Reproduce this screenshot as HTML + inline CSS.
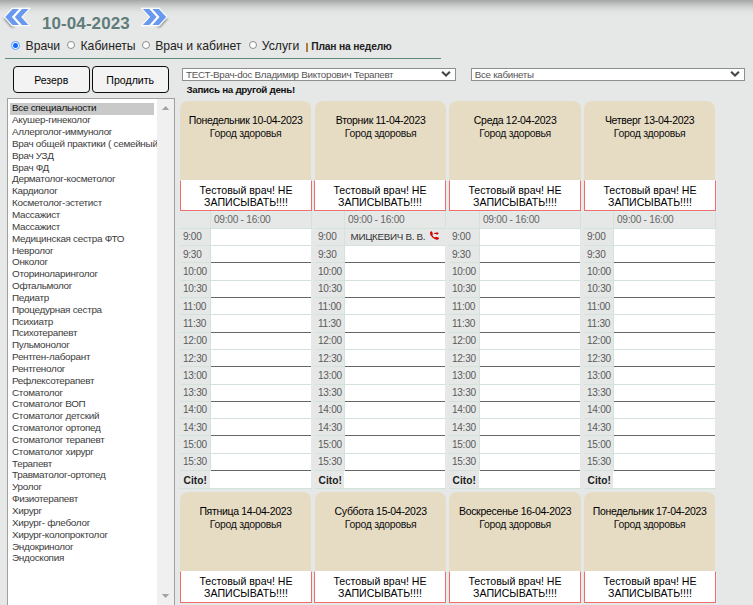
<!DOCTYPE html>
<html><head><meta charset="utf-8"><style>
html,body{margin:0;padding:0;}
body{width:753px;height:605px;overflow:hidden;background:#e6e8e7;position:relative;font-family:'Liberation Sans', sans-serif;}
.t{position:absolute;white-space:nowrap;}
.a{position:absolute;}
</style></head>
<body>
<div class="a" style="left:0;top:0;width:753px;height:17px;background:linear-gradient(#a3a5a4 0px,#b9bbba 3px,#cbcdcc 6px,#d9dbda 9px,#e2e4e3 12px,#e6e8e7 16px);"></div>
<svg class="a" style="left:0;top:0" width="180" height="32" viewBox="0 0 180 32"><defs><filter id="sh0" x="-20%" y="-20%" width="140%" height="160%"><feGaussianBlur stdDeviation="0.9"/></filter></defs>
<g >
<polygon points="3.2,18.2 11.2,27.2 15,27.2 7,18.2" fill="#6a6c6b" opacity="0.8" filter="url(#sh0)"/>
<polygon points="4,17 12,8 30.5,8 22.5,17 30.5,26 12,26" fill="#fff" stroke="#f4f6f5" stroke-width="0.8" stroke-linejoin="round"/>
<polygon points="5.2,17 12.5,9 19,9 11.8,17 19,25 12.5,25" fill="#6898ef"/>
<polygon points="14.8,17 22,9 28.5,9 21.2,17 28.5,25 22,25" fill="#6898ef"/>
</g></svg>
<svg class="a" style="left:0;top:0" width="180" height="32" viewBox="0 0 180 32"><defs><filter id="sh1" x="-20%" y="-20%" width="140%" height="160%"><feGaussianBlur stdDeviation="0.9"/></filter></defs>
<g transform="translate(171.4,0) scale(-1,1)">
<polygon points="3.2,18.2 11.2,27.2 15,27.2 7,18.2" fill="#6a6c6b" opacity="0.8" filter="url(#sh1)"/>
<polygon points="4,17 12,8 30.5,8 22.5,17 30.5,26 12,26" fill="#fff" stroke="#f4f6f5" stroke-width="0.8" stroke-linejoin="round"/>
<polygon points="5.2,17 12.5,9 19,9 11.8,17 19,25 12.5,25" fill="#6898ef"/>
<polygon points="14.8,17 22,9 28.5,9 21.2,17 28.5,25 22,25" fill="#6898ef"/>
</g></svg>
<div class="t" style="left:42.00px;top:13.91px;font-size:17px;line-height:20.4px;color:#5f7d7b;font-weight:bold;letter-spacing:0.08px;">10-04-2023</div>
<div class="a" style="left:11.0px;top:40.8px;width:7px;height:7px;border:1px solid #5d9bff;border-radius:50%;background:#fff;"></div>
<div class="a" style="left:13.0px;top:42.8px;width:5px;height:5px;border-radius:50%;background:#0b6cff;"></div>
<div class="t" style="left:25.50px;top:39.05px;font-size:12.2px;line-height:14.64px;color:#222;">Врачи</div>
<div class="a" style="left:67px;top:41.1px;width:6px;height:6px;border:1px solid #8c8c8c;border-radius:50%;background:#fff;"></div>
<div class="t" style="left:80.50px;top:39.05px;font-size:12.2px;line-height:14.64px;color:#222;">Кабинеты</div>
<div class="a" style="left:142.3px;top:41.1px;width:6px;height:6px;border:1px solid #8c8c8c;border-radius:50%;background:#fff;"></div>
<div class="t" style="left:155.20px;top:39.05px;font-size:12.2px;line-height:14.64px;color:#222;">Врач и кабинет</div>
<div class="a" style="left:249px;top:41.1px;width:6px;height:6px;border:1px solid #8c8c8c;border-radius:50%;background:#fff;"></div>
<div class="t" style="left:261.80px;top:39.05px;font-size:12.2px;line-height:14.64px;color:#222;">Услуги</div>
<div class="a" style="left:306.2px;top:42.6px;width:1.4px;height:9px;background:#b07c3c;"></div>
<div class="t" style="left:311.30px;top:40.89px;font-size:10.26px;line-height:12.31px;color:#222;font-weight:bold;letter-spacing:-0.173px;">План на неделю</div>
<div class="a" style="left:5px;top:58px;width:436px;height:1px;background:#5e8a7e;"></div>
<div class="a" style="left:13px;top:66px;width:75px;height:25px;border:1px solid #0c0c0c;border-radius:4px;background:#f3f3f3;"></div>
<div class="a" style="left:92px;top:66px;width:75px;height:25px;border:1px solid #0c0c0c;border-radius:4px;background:#f3f3f3;"></div>
<div class="t" style="left:34.20px;top:74.06px;font-size:10.5px;line-height:12.6px;color:#000;">Резерв</div>
<div class="t" style="left:106.30px;top:73.96px;font-size:10.6px;line-height:12.72px;color:#000;">Продлить</div>
<div class="a" style="left:182px;top:68px;width:272px;height:11px;border:1px solid #8e8e8e;background:#fff;"></div>
<svg class="a" style="left:441px;top:70px" width="12" height="9" viewBox="0 0 12 9"><polyline points="1.1,1.7 5,5.6 8.9,1.7" fill="none" stroke="#474747" stroke-width="2.1"/></svg>
<div class="t" style="left:186.00px;top:68.71px;font-size:9.82px;line-height:11.78px;color:#555;letter-spacing:-0.299px;">ТЕСТ-Врач-doc Владимир Викторович Терапевт</div>
<div class="a" style="left:471px;top:68px;width:272px;height:11px;border:1px solid #8e8e8e;background:#fff;"></div>
<svg class="a" style="left:730px;top:70px" width="12" height="9" viewBox="0 0 12 9"><polyline points="1.1,1.7 5,5.6 8.9,1.7" fill="none" stroke="#474747" stroke-width="2.1"/></svg>
<div class="t" style="left:474.80px;top:68.77px;font-size:9.75px;line-height:11.7px;color:#555;letter-spacing:-0.293px;">Все кабинеты</div>
<div class="t" style="left:186.50px;top:83.92px;font-size:9.8px;line-height:11.76px;color:#111;font-weight:bold;letter-spacing:-0.293px;">Запись на другой день!</div>
<div class="a" style="left:7px;top:98px;width:166px;height:520px;border:1px solid #a0a0a0;background:#fff;"></div>
<div class="a" style="left:157px;top:99px;width:17px;height:520px;background:#f0f0f0;"></div>
<svg class="a" style="left:160px;top:104px" width="12" height="8" viewBox="0 0 12 8"><polygon points="1.8,5.9 5.8,1.9 9.2,5.9" fill="#a3a3a3"/></svg>
<svg class="a" style="left:160px;top:592px" width="12" height="8" viewBox="0 0 12 8"><polygon points="1.8,2 9.2,2 5.6,6" fill="#a3a3a3"/></svg>
<div class="a" style="left:10px;top:103px;width:144px;height:12px;background:#c9c9c9;"></div>
<div class="a" style="left:0;top:0;width:157px;height:605px;overflow:hidden;"><div class="t" style="left:12px;top:102.44px;font-size:9.91px;line-height:11.84px;color:#111;letter-spacing:-0.297px;">Все специальности</div><div class="t" style="left:12px;top:114.28px;font-size:9.91px;line-height:11.84px;color:#3c3c3c;letter-spacing:-0.294px;">Акушер-гинеколог</div><div class="t" style="left:12px;top:126.12px;font-size:9.91px;line-height:11.84px;color:#3c3c3c;letter-spacing:-0.300px;">Аллерголог-иммунолог</div><div class="t" style="left:12px;top:137.96px;font-size:9.91px;line-height:11.84px;color:#3c3c3c;letter-spacing:-0.291px;">Врач общей практики ( семейный</div><div class="t" style="left:12px;top:149.80px;font-size:9.91px;line-height:11.84px;color:#3c3c3c;letter-spacing:-0.312px;">Врач УЗД</div><div class="t" style="left:12px;top:161.64px;font-size:9.91px;line-height:11.84px;color:#3c3c3c;letter-spacing:-0.317px;">Врач ФД</div><div class="t" style="left:12px;top:173.48px;font-size:9.91px;line-height:11.84px;color:#3c3c3c;letter-spacing:-0.295px;">Дерматолог-косметолог</div><div class="t" style="left:12px;top:185.32px;font-size:9.91px;line-height:11.84px;color:#3c3c3c;letter-spacing:-0.303px;">Кардиолог</div><div class="t" style="left:12px;top:197.16px;font-size:9.91px;line-height:11.84px;color:#3c3c3c;letter-spacing:-0.284px;">Косметолог-эстетист</div><div class="t" style="left:12px;top:209.00px;font-size:9.91px;line-height:11.84px;color:#3c3c3c;letter-spacing:-0.320px;">Массажист</div><div class="t" style="left:12px;top:220.84px;font-size:9.91px;line-height:11.84px;color:#3c3c3c;letter-spacing:-0.320px;">Массажист</div><div class="t" style="left:12px;top:232.68px;font-size:9.91px;line-height:11.84px;color:#3c3c3c;letter-spacing:-0.305px;">Медицинская сестра ФТО</div><div class="t" style="left:12px;top:244.52px;font-size:9.91px;line-height:11.84px;color:#3c3c3c;letter-spacing:-0.309px;">Невролог</div><div class="t" style="left:12px;top:256.36px;font-size:9.91px;line-height:11.84px;color:#3c3c3c;letter-spacing:-0.306px;">Онколог</div><div class="t" style="left:12px;top:268.20px;font-size:9.91px;line-height:11.84px;color:#3c3c3c;letter-spacing:-0.302px;">Оториноларинголог</div><div class="t" style="left:12px;top:280.04px;font-size:9.91px;line-height:11.84px;color:#3c3c3c;letter-spacing:-0.327px;">Офтальмолог</div><div class="t" style="left:12px;top:291.88px;font-size:9.91px;line-height:11.84px;color:#3c3c3c;letter-spacing:-0.315px;">Педиатр</div><div class="t" style="left:12px;top:303.72px;font-size:9.91px;line-height:11.84px;color:#3c3c3c;letter-spacing:-0.299px;">Процедурная сестра</div><div class="t" style="left:12px;top:315.56px;font-size:9.91px;line-height:11.84px;color:#3c3c3c;letter-spacing:-0.307px;">Психиатр</div><div class="t" style="left:12px;top:327.40px;font-size:9.91px;line-height:11.84px;color:#3c3c3c;letter-spacing:-0.301px;">Психотерапевт</div><div class="t" style="left:12px;top:339.24px;font-size:9.91px;line-height:11.84px;color:#3c3c3c;letter-spacing:-0.313px;">Пульмонолог</div><div class="t" style="left:12px;top:351.08px;font-size:9.91px;line-height:11.84px;color:#3c3c3c;letter-spacing:-0.293px;">Рентген-лаборант</div><div class="t" style="left:12px;top:362.92px;font-size:9.91px;line-height:11.84px;color:#3c3c3c;letter-spacing:-0.290px;">Рентгенолог</div><div class="t" style="left:12px;top:374.76px;font-size:9.91px;line-height:11.84px;color:#3c3c3c;letter-spacing:-0.308px;">Рефлексотерапевт</div><div class="t" style="left:12px;top:386.60px;font-size:9.91px;line-height:11.84px;color:#3c3c3c;letter-spacing:-0.305px;">Стоматолог</div><div class="t" style="left:12px;top:398.44px;font-size:9.91px;line-height:11.84px;color:#3c3c3c;letter-spacing:-0.314px;">Стоматолог ВОП</div><div class="t" style="left:12px;top:410.28px;font-size:9.91px;line-height:11.84px;color:#3c3c3c;letter-spacing:-0.290px;">Стоматолог детский</div><div class="t" style="left:12px;top:422.12px;font-size:9.91px;line-height:11.84px;color:#3c3c3c;letter-spacing:-0.295px;">Стоматолог ортопед</div><div class="t" style="left:12px;top:433.96px;font-size:9.91px;line-height:11.84px;color:#3c3c3c;letter-spacing:-0.292px;">Стоматолог терапевт</div><div class="t" style="left:12px;top:445.80px;font-size:9.91px;line-height:11.84px;color:#3c3c3c;letter-spacing:-0.288px;">Стоматолог хирург</div><div class="t" style="left:12px;top:457.64px;font-size:9.91px;line-height:11.84px;color:#3c3c3c;letter-spacing:-0.300px;">Терапевт</div><div class="t" style="left:12px;top:469.48px;font-size:9.91px;line-height:11.84px;color:#3c3c3c;letter-spacing:-0.294px;">Травматолог-ортопед</div><div class="t" style="left:12px;top:481.32px;font-size:9.91px;line-height:11.84px;color:#3c3c3c;letter-spacing:-0.298px;">Уролог</div><div class="t" style="left:12px;top:493.16px;font-size:9.91px;line-height:11.84px;color:#3c3c3c;letter-spacing:-0.304px;">Физиотерапевт</div><div class="t" style="left:12px;top:505.00px;font-size:9.91px;line-height:11.84px;color:#3c3c3c;letter-spacing:-0.297px;">Хирург</div><div class="t" style="left:12px;top:516.84px;font-size:9.91px;line-height:11.84px;color:#3c3c3c;letter-spacing:-0.292px;">Хирург- флеболог</div><div class="t" style="left:12px;top:528.68px;font-size:9.91px;line-height:11.84px;color:#3c3c3c;letter-spacing:-0.287px;">Хирург-колопроктолог</div><div class="t" style="left:12px;top:540.52px;font-size:9.91px;line-height:11.84px;color:#3c3c3c;letter-spacing:-0.306px;">Эндокринолог</div><div class="t" style="left:12px;top:552.36px;font-size:9.91px;line-height:11.84px;color:#3c3c3c;letter-spacing:-0.311px;">Эндоскопия</div></div>
<div class="a" style="left:180px;top:101px;width:131px;height:79px;background:#e6dcc4;border-radius:8px 8px 0 0;"></div>
<div class="t" style="left:180.15px;top:115.37px;font-size:10.49px;line-height:12.59px;color:#000;text-align:center;width:131px;letter-spacing:-0.309px;">Понедельник 10-04-2023</div>
<div class="t" style="left:180.15px;top:127.72px;font-size:10.44px;line-height:12.53px;color:#111;text-align:center;width:131px;letter-spacing:-0.306px;">Город здоровья</div>
<div class="a" style="left:312px;top:180px;width:2px;height:32px;background:#e3efed;"></div>
<div class="a" style="left:180px;top:180px;width:130px;height:29px;background:#fff;border:1px solid #f36b6b;border-top:1px solid #fff;"></div>
<div class="t" style="left:180.00px;top:183.66px;font-size:10.6px;line-height:12.72px;color:#000;text-align:center;width:132px;">Тестовый врач! НЕ</div>
<div class="t" style="left:180.00px;top:195.76px;font-size:10.6px;line-height:12.72px;color:#000;text-align:center;width:132px;">ЗАПИСЫВАТЬ!!!!</div>
<div class="a" style="left:180px;top:211px;width:132px;height:1px;background:#e3efed;"></div>
<div class="a" style="left:311px;top:211px;width:1px;height:18px;background:#d3e3da;"></div>
<div class="t" style="left:213.90px;top:214.06px;font-size:10.18px;line-height:12.22px;color:#666;letter-spacing:-0.263px;">09:00 - 16:00</div>
<div class="a" style="left:210px;top:211px;width:1px;height:259px;background:#d3e3da;"></div>
<div class="a" style="left:180px;top:228px;width:131px;height:1px;background:#d3e3da;"></div>
<div class="a" style="left:211px;top:229px;width:100px;height:16px;background:#fff;"></div>
<div class="a" style="left:180px;top:245px;width:30px;height:1px;background:#d3e3da;"></div>
<div class="a" style="left:211px;top:245px;width:100px;height:1px;background:#d3e3da;"></div>
<div class="t" style="left:183.00px;top:231.47px;font-size:10.07px;line-height:12.08px;color:#5a5a5a;letter-spacing:-0.277px;">9:00</div>
<div class="a" style="left:211px;top:246px;width:100px;height:16px;background:#fff;"></div>
<div class="a" style="left:180px;top:262px;width:30px;height:1px;background:#d3e3da;"></div>
<div class="a" style="left:211px;top:262px;width:100px;height:1px;background:#666;"></div>
<div class="t" style="left:183.00px;top:248.76px;font-size:10.07px;line-height:12.08px;color:#5a5a5a;letter-spacing:-0.277px;">9:30</div>
<div class="a" style="left:211px;top:263px;width:100px;height:17px;background:#fff;"></div>
<div class="a" style="left:180px;top:280px;width:30px;height:1px;background:#d3e3da;"></div>
<div class="a" style="left:211px;top:280px;width:100px;height:1px;background:#d3e3da;"></div>
<div class="t" style="left:183.00px;top:266.05px;font-size:10.07px;line-height:12.08px;color:#5a5a5a;letter-spacing:-0.285px;">10:00</div>
<div class="a" style="left:211px;top:281px;width:100px;height:16px;background:#fff;"></div>
<div class="a" style="left:180px;top:297px;width:30px;height:1px;background:#d3e3da;"></div>
<div class="a" style="left:211px;top:297px;width:100px;height:1px;background:#666;"></div>
<div class="t" style="left:183.00px;top:283.34px;font-size:10.07px;line-height:12.08px;color:#5a5a5a;letter-spacing:-0.285px;">10:30</div>
<div class="a" style="left:211px;top:298px;width:100px;height:16px;background:#fff;"></div>
<div class="a" style="left:180px;top:314px;width:30px;height:1px;background:#d3e3da;"></div>
<div class="a" style="left:211px;top:314px;width:100px;height:1px;background:#d3e3da;"></div>
<div class="t" style="left:183.00px;top:300.63px;font-size:10.07px;line-height:12.08px;color:#5a5a5a;letter-spacing:-0.277px;">11:00</div>
<div class="a" style="left:211px;top:315px;width:100px;height:17px;background:#fff;"></div>
<div class="a" style="left:180px;top:332px;width:30px;height:1px;background:#d3e3da;"></div>
<div class="a" style="left:211px;top:332px;width:100px;height:1px;background:#666;"></div>
<div class="t" style="left:183.00px;top:317.92px;font-size:10.07px;line-height:12.08px;color:#5a5a5a;letter-spacing:-0.277px;">11:30</div>
<div class="a" style="left:211px;top:333px;width:100px;height:16px;background:#fff;"></div>
<div class="a" style="left:180px;top:349px;width:30px;height:1px;background:#d3e3da;"></div>
<div class="a" style="left:211px;top:349px;width:100px;height:1px;background:#d3e3da;"></div>
<div class="t" style="left:183.00px;top:335.21px;font-size:10.07px;line-height:12.08px;color:#5a5a5a;letter-spacing:-0.285px;">12:00</div>
<div class="a" style="left:211px;top:350px;width:100px;height:16px;background:#fff;"></div>
<div class="a" style="left:180px;top:366px;width:30px;height:1px;background:#d3e3da;"></div>
<div class="a" style="left:211px;top:366px;width:100px;height:1px;background:#666;"></div>
<div class="t" style="left:183.00px;top:352.50px;font-size:10.07px;line-height:12.08px;color:#5a5a5a;letter-spacing:-0.285px;">12:30</div>
<div class="a" style="left:211px;top:367px;width:100px;height:17px;background:#fff;"></div>
<div class="a" style="left:180px;top:384px;width:30px;height:1px;background:#d3e3da;"></div>
<div class="a" style="left:211px;top:384px;width:100px;height:1px;background:#d3e3da;"></div>
<div class="t" style="left:183.00px;top:369.79px;font-size:10.07px;line-height:12.08px;color:#5a5a5a;letter-spacing:-0.285px;">13:00</div>
<div class="a" style="left:211px;top:385px;width:100px;height:16px;background:#fff;"></div>
<div class="a" style="left:180px;top:401px;width:30px;height:1px;background:#d3e3da;"></div>
<div class="a" style="left:211px;top:401px;width:100px;height:1px;background:#666;"></div>
<div class="t" style="left:183.00px;top:387.08px;font-size:10.07px;line-height:12.08px;color:#5a5a5a;letter-spacing:-0.285px;">13:30</div>
<div class="a" style="left:211px;top:402px;width:100px;height:16px;background:#fff;"></div>
<div class="a" style="left:180px;top:418px;width:30px;height:1px;background:#d3e3da;"></div>
<div class="a" style="left:211px;top:418px;width:100px;height:1px;background:#d3e3da;"></div>
<div class="t" style="left:183.00px;top:404.37px;font-size:10.07px;line-height:12.08px;color:#5a5a5a;letter-spacing:-0.285px;">14:00</div>
<div class="a" style="left:211px;top:419px;width:100px;height:16px;background:#fff;"></div>
<div class="a" style="left:180px;top:435px;width:30px;height:1px;background:#d3e3da;"></div>
<div class="a" style="left:211px;top:435px;width:100px;height:1px;background:#666;"></div>
<div class="t" style="left:183.00px;top:421.66px;font-size:10.07px;line-height:12.08px;color:#5a5a5a;letter-spacing:-0.285px;">14:30</div>
<div class="a" style="left:211px;top:436px;width:100px;height:17px;background:#fff;"></div>
<div class="a" style="left:180px;top:453px;width:30px;height:1px;background:#d3e3da;"></div>
<div class="a" style="left:211px;top:453px;width:100px;height:1px;background:#d3e3da;"></div>
<div class="t" style="left:183.00px;top:438.95px;font-size:10.07px;line-height:12.08px;color:#5a5a5a;letter-spacing:-0.285px;">15:00</div>
<div class="a" style="left:211px;top:454px;width:100px;height:16px;background:#fff;"></div>
<div class="a" style="left:180px;top:470px;width:30px;height:1px;background:#d3e3da;"></div>
<div class="a" style="left:211px;top:470px;width:100px;height:1px;background:#666;"></div>
<div class="t" style="left:183.00px;top:456.24px;font-size:10.07px;line-height:12.08px;color:#5a5a5a;letter-spacing:-0.285px;">15:30</div>
<div class="a" style="left:210px;top:471px;width:101px;height:17px;background:#fff;"></div>
<div class="a" style="left:180px;top:488px;width:132px;height:1px;background:#d3e3da;"></div>
<div class="t" style="left:183.60px;top:474.74px;font-size:10.2px;line-height:12.24px;color:#1a1a1a;font-weight:bold;">Cito!</div>
<div class="a" style="left:315px;top:101px;width:131px;height:79px;background:#e6dcc4;border-radius:8px 8px 0 0;"></div>
<div class="t" style="left:315.15px;top:115.37px;font-size:10.49px;line-height:12.59px;color:#000;text-align:center;width:131px;letter-spacing:-0.297px;">Вторник 11-04-2023</div>
<div class="t" style="left:315.15px;top:127.72px;font-size:10.44px;line-height:12.53px;color:#111;text-align:center;width:131px;letter-spacing:-0.306px;">Город здоровья</div>
<div class="a" style="left:446px;top:180px;width:2px;height:32px;background:#e3efed;"></div>
<div class="a" style="left:314px;top:180px;width:130px;height:29px;background:#fff;border:1px solid #f36b6b;border-top:1px solid #fff;"></div>
<div class="t" style="left:314.00px;top:183.66px;font-size:10.6px;line-height:12.72px;color:#000;text-align:center;width:132px;">Тестовый врач! НЕ</div>
<div class="t" style="left:314.00px;top:195.76px;font-size:10.6px;line-height:12.72px;color:#000;text-align:center;width:132px;">ЗАПИСЫВАТЬ!!!!</div>
<div class="a" style="left:315px;top:211px;width:131px;height:1px;background:#e3efed;"></div>
<div class="a" style="left:445px;top:211px;width:1px;height:18px;background:#d3e3da;"></div>
<div class="t" style="left:347.90px;top:214.06px;font-size:10.18px;line-height:12.22px;color:#666;letter-spacing:-0.263px;">09:00 - 16:00</div>
<div class="a" style="left:344px;top:211px;width:1px;height:259px;background:#d3e3da;"></div>
<div class="a" style="left:315px;top:228px;width:130px;height:1px;background:#d3e3da;"></div>
<div class="a" style="left:345px;top:229px;width:100px;height:16px;background:#e6e8e7;"></div>
<div class="a" style="left:315px;top:245px;width:29px;height:1px;background:#d3e3da;"></div>
<div class="a" style="left:345px;top:245px;width:100px;height:1px;background:#d3e3da;"></div>
<div class="t" style="left:318.00px;top:231.47px;font-size:10.07px;line-height:12.08px;color:#5a5a5a;letter-spacing:-0.277px;">9:00</div>
<div class="t" style="left:350.50px;top:231.17px;font-size:9.86px;line-height:11.83px;color:#333;letter-spacing:-0.322px;">МИЦКЕВИЧ В. В.</div>
<svg class="a" style="left:427px;top:228px" width="16" height="16" viewBox="0 0 16 16"><ellipse cx="4.4" cy="5.6" rx="1.35" ry="2.4" fill="#d40000" transform="rotate(-8 4.4 5.6)"/><path d="M4.7,7.6 Q5.6,9.6 8.2,10.3" fill="none" stroke="#d40000" stroke-width="1.3"/><ellipse cx="9.7" cy="10.3" rx="2.3" ry="1.35" fill="#d40000" transform="rotate(8 9.7 10.3)"/><path d="M7.2,5.4 L10.3,5.4" stroke="#d40000" stroke-width="1.2"/><polygon points="9.6,3.7 11.8,5.4 9.6,7.1" fill="#d40000"/></svg>
<div class="a" style="left:345px;top:246px;width:100px;height:16px;background:#fff;"></div>
<div class="a" style="left:315px;top:262px;width:29px;height:1px;background:#d3e3da;"></div>
<div class="a" style="left:345px;top:262px;width:100px;height:1px;background:#666;"></div>
<div class="t" style="left:318.00px;top:248.76px;font-size:10.07px;line-height:12.08px;color:#5a5a5a;letter-spacing:-0.277px;">9:30</div>
<div class="a" style="left:345px;top:263px;width:100px;height:17px;background:#fff;"></div>
<div class="a" style="left:315px;top:280px;width:29px;height:1px;background:#d3e3da;"></div>
<div class="a" style="left:345px;top:280px;width:100px;height:1px;background:#d3e3da;"></div>
<div class="t" style="left:318.00px;top:266.05px;font-size:10.07px;line-height:12.08px;color:#5a5a5a;letter-spacing:-0.285px;">10:00</div>
<div class="a" style="left:345px;top:281px;width:100px;height:16px;background:#fff;"></div>
<div class="a" style="left:315px;top:297px;width:29px;height:1px;background:#d3e3da;"></div>
<div class="a" style="left:345px;top:297px;width:100px;height:1px;background:#666;"></div>
<div class="t" style="left:318.00px;top:283.34px;font-size:10.07px;line-height:12.08px;color:#5a5a5a;letter-spacing:-0.285px;">10:30</div>
<div class="a" style="left:345px;top:298px;width:100px;height:16px;background:#fff;"></div>
<div class="a" style="left:315px;top:314px;width:29px;height:1px;background:#d3e3da;"></div>
<div class="a" style="left:345px;top:314px;width:100px;height:1px;background:#d3e3da;"></div>
<div class="t" style="left:318.00px;top:300.63px;font-size:10.07px;line-height:12.08px;color:#5a5a5a;letter-spacing:-0.277px;">11:00</div>
<div class="a" style="left:345px;top:315px;width:100px;height:17px;background:#fff;"></div>
<div class="a" style="left:315px;top:332px;width:29px;height:1px;background:#d3e3da;"></div>
<div class="a" style="left:345px;top:332px;width:100px;height:1px;background:#666;"></div>
<div class="t" style="left:318.00px;top:317.92px;font-size:10.07px;line-height:12.08px;color:#5a5a5a;letter-spacing:-0.277px;">11:30</div>
<div class="a" style="left:345px;top:333px;width:100px;height:16px;background:#fff;"></div>
<div class="a" style="left:315px;top:349px;width:29px;height:1px;background:#d3e3da;"></div>
<div class="a" style="left:345px;top:349px;width:100px;height:1px;background:#d3e3da;"></div>
<div class="t" style="left:318.00px;top:335.21px;font-size:10.07px;line-height:12.08px;color:#5a5a5a;letter-spacing:-0.285px;">12:00</div>
<div class="a" style="left:345px;top:350px;width:100px;height:16px;background:#fff;"></div>
<div class="a" style="left:315px;top:366px;width:29px;height:1px;background:#d3e3da;"></div>
<div class="a" style="left:345px;top:366px;width:100px;height:1px;background:#666;"></div>
<div class="t" style="left:318.00px;top:352.50px;font-size:10.07px;line-height:12.08px;color:#5a5a5a;letter-spacing:-0.285px;">12:30</div>
<div class="a" style="left:345px;top:367px;width:100px;height:17px;background:#fff;"></div>
<div class="a" style="left:315px;top:384px;width:29px;height:1px;background:#d3e3da;"></div>
<div class="a" style="left:345px;top:384px;width:100px;height:1px;background:#d3e3da;"></div>
<div class="t" style="left:318.00px;top:369.79px;font-size:10.07px;line-height:12.08px;color:#5a5a5a;letter-spacing:-0.285px;">13:00</div>
<div class="a" style="left:345px;top:385px;width:100px;height:16px;background:#fff;"></div>
<div class="a" style="left:315px;top:401px;width:29px;height:1px;background:#d3e3da;"></div>
<div class="a" style="left:345px;top:401px;width:100px;height:1px;background:#666;"></div>
<div class="t" style="left:318.00px;top:387.08px;font-size:10.07px;line-height:12.08px;color:#5a5a5a;letter-spacing:-0.285px;">13:30</div>
<div class="a" style="left:345px;top:402px;width:100px;height:16px;background:#fff;"></div>
<div class="a" style="left:315px;top:418px;width:29px;height:1px;background:#d3e3da;"></div>
<div class="a" style="left:345px;top:418px;width:100px;height:1px;background:#d3e3da;"></div>
<div class="t" style="left:318.00px;top:404.37px;font-size:10.07px;line-height:12.08px;color:#5a5a5a;letter-spacing:-0.285px;">14:00</div>
<div class="a" style="left:345px;top:419px;width:100px;height:16px;background:#fff;"></div>
<div class="a" style="left:315px;top:435px;width:29px;height:1px;background:#d3e3da;"></div>
<div class="a" style="left:345px;top:435px;width:100px;height:1px;background:#666;"></div>
<div class="t" style="left:318.00px;top:421.66px;font-size:10.07px;line-height:12.08px;color:#5a5a5a;letter-spacing:-0.285px;">14:30</div>
<div class="a" style="left:345px;top:436px;width:100px;height:17px;background:#fff;"></div>
<div class="a" style="left:315px;top:453px;width:29px;height:1px;background:#d3e3da;"></div>
<div class="a" style="left:345px;top:453px;width:100px;height:1px;background:#d3e3da;"></div>
<div class="t" style="left:318.00px;top:438.95px;font-size:10.07px;line-height:12.08px;color:#5a5a5a;letter-spacing:-0.285px;">15:00</div>
<div class="a" style="left:345px;top:454px;width:100px;height:16px;background:#fff;"></div>
<div class="a" style="left:315px;top:470px;width:29px;height:1px;background:#d3e3da;"></div>
<div class="a" style="left:345px;top:470px;width:100px;height:1px;background:#666;"></div>
<div class="t" style="left:318.00px;top:456.24px;font-size:10.07px;line-height:12.08px;color:#5a5a5a;letter-spacing:-0.285px;">15:30</div>
<div class="a" style="left:344px;top:471px;width:101px;height:17px;background:#fff;"></div>
<div class="a" style="left:315px;top:488px;width:131px;height:1px;background:#d3e3da;"></div>
<div class="t" style="left:318.60px;top:474.74px;font-size:10.2px;line-height:12.24px;color:#1a1a1a;font-weight:bold;">Cito!</div>
<div class="a" style="left:449px;top:101px;width:132px;height:79px;background:#e6dcc4;border-radius:8px 8px 0 0;"></div>
<div class="t" style="left:449.15px;top:115.37px;font-size:10.49px;line-height:12.59px;color:#000;text-align:center;width:132px;letter-spacing:-0.308px;">Среда 12-04-2023</div>
<div class="t" style="left:449.15px;top:127.72px;font-size:10.44px;line-height:12.53px;color:#111;text-align:center;width:132px;letter-spacing:-0.306px;">Город здоровья</div>
<div class="a" style="left:581px;top:180px;width:2px;height:32px;background:#e3efed;"></div>
<div class="a" style="left:449px;top:180px;width:130px;height:29px;background:#fff;border:1px solid #f36b6b;border-top:1px solid #fff;"></div>
<div class="t" style="left:449.00px;top:183.66px;font-size:10.6px;line-height:12.72px;color:#000;text-align:center;width:132px;">Тестовый врач! НЕ</div>
<div class="t" style="left:449.00px;top:195.76px;font-size:10.6px;line-height:12.72px;color:#000;text-align:center;width:132px;">ЗАПИСЫВАТЬ!!!!</div>
<div class="a" style="left:449px;top:211px;width:132px;height:1px;background:#e3efed;"></div>
<div class="a" style="left:580px;top:211px;width:1px;height:18px;background:#d3e3da;"></div>
<div class="t" style="left:482.90px;top:214.06px;font-size:10.18px;line-height:12.22px;color:#666;letter-spacing:-0.263px;">09:00 - 16:00</div>
<div class="a" style="left:479px;top:211px;width:1px;height:259px;background:#d3e3da;"></div>
<div class="a" style="left:449px;top:228px;width:131px;height:1px;background:#d3e3da;"></div>
<div class="a" style="left:480px;top:229px;width:100px;height:16px;background:#fff;"></div>
<div class="a" style="left:449px;top:245px;width:30px;height:1px;background:#d3e3da;"></div>
<div class="a" style="left:480px;top:245px;width:100px;height:1px;background:#d3e3da;"></div>
<div class="t" style="left:452.00px;top:231.47px;font-size:10.07px;line-height:12.08px;color:#5a5a5a;letter-spacing:-0.277px;">9:00</div>
<div class="a" style="left:480px;top:246px;width:100px;height:16px;background:#fff;"></div>
<div class="a" style="left:449px;top:262px;width:30px;height:1px;background:#d3e3da;"></div>
<div class="a" style="left:480px;top:262px;width:100px;height:1px;background:#666;"></div>
<div class="t" style="left:452.00px;top:248.76px;font-size:10.07px;line-height:12.08px;color:#5a5a5a;letter-spacing:-0.277px;">9:30</div>
<div class="a" style="left:480px;top:263px;width:100px;height:17px;background:#fff;"></div>
<div class="a" style="left:449px;top:280px;width:30px;height:1px;background:#d3e3da;"></div>
<div class="a" style="left:480px;top:280px;width:100px;height:1px;background:#d3e3da;"></div>
<div class="t" style="left:452.00px;top:266.05px;font-size:10.07px;line-height:12.08px;color:#5a5a5a;letter-spacing:-0.285px;">10:00</div>
<div class="a" style="left:480px;top:281px;width:100px;height:16px;background:#fff;"></div>
<div class="a" style="left:449px;top:297px;width:30px;height:1px;background:#d3e3da;"></div>
<div class="a" style="left:480px;top:297px;width:100px;height:1px;background:#666;"></div>
<div class="t" style="left:452.00px;top:283.34px;font-size:10.07px;line-height:12.08px;color:#5a5a5a;letter-spacing:-0.285px;">10:30</div>
<div class="a" style="left:480px;top:298px;width:100px;height:16px;background:#fff;"></div>
<div class="a" style="left:449px;top:314px;width:30px;height:1px;background:#d3e3da;"></div>
<div class="a" style="left:480px;top:314px;width:100px;height:1px;background:#d3e3da;"></div>
<div class="t" style="left:452.00px;top:300.63px;font-size:10.07px;line-height:12.08px;color:#5a5a5a;letter-spacing:-0.277px;">11:00</div>
<div class="a" style="left:480px;top:315px;width:100px;height:17px;background:#fff;"></div>
<div class="a" style="left:449px;top:332px;width:30px;height:1px;background:#d3e3da;"></div>
<div class="a" style="left:480px;top:332px;width:100px;height:1px;background:#666;"></div>
<div class="t" style="left:452.00px;top:317.92px;font-size:10.07px;line-height:12.08px;color:#5a5a5a;letter-spacing:-0.277px;">11:30</div>
<div class="a" style="left:480px;top:333px;width:100px;height:16px;background:#fff;"></div>
<div class="a" style="left:449px;top:349px;width:30px;height:1px;background:#d3e3da;"></div>
<div class="a" style="left:480px;top:349px;width:100px;height:1px;background:#d3e3da;"></div>
<div class="t" style="left:452.00px;top:335.21px;font-size:10.07px;line-height:12.08px;color:#5a5a5a;letter-spacing:-0.285px;">12:00</div>
<div class="a" style="left:480px;top:350px;width:100px;height:16px;background:#fff;"></div>
<div class="a" style="left:449px;top:366px;width:30px;height:1px;background:#d3e3da;"></div>
<div class="a" style="left:480px;top:366px;width:100px;height:1px;background:#666;"></div>
<div class="t" style="left:452.00px;top:352.50px;font-size:10.07px;line-height:12.08px;color:#5a5a5a;letter-spacing:-0.285px;">12:30</div>
<div class="a" style="left:480px;top:367px;width:100px;height:17px;background:#fff;"></div>
<div class="a" style="left:449px;top:384px;width:30px;height:1px;background:#d3e3da;"></div>
<div class="a" style="left:480px;top:384px;width:100px;height:1px;background:#d3e3da;"></div>
<div class="t" style="left:452.00px;top:369.79px;font-size:10.07px;line-height:12.08px;color:#5a5a5a;letter-spacing:-0.285px;">13:00</div>
<div class="a" style="left:480px;top:385px;width:100px;height:16px;background:#fff;"></div>
<div class="a" style="left:449px;top:401px;width:30px;height:1px;background:#d3e3da;"></div>
<div class="a" style="left:480px;top:401px;width:100px;height:1px;background:#666;"></div>
<div class="t" style="left:452.00px;top:387.08px;font-size:10.07px;line-height:12.08px;color:#5a5a5a;letter-spacing:-0.285px;">13:30</div>
<div class="a" style="left:480px;top:402px;width:100px;height:16px;background:#fff;"></div>
<div class="a" style="left:449px;top:418px;width:30px;height:1px;background:#d3e3da;"></div>
<div class="a" style="left:480px;top:418px;width:100px;height:1px;background:#d3e3da;"></div>
<div class="t" style="left:452.00px;top:404.37px;font-size:10.07px;line-height:12.08px;color:#5a5a5a;letter-spacing:-0.285px;">14:00</div>
<div class="a" style="left:480px;top:419px;width:100px;height:16px;background:#fff;"></div>
<div class="a" style="left:449px;top:435px;width:30px;height:1px;background:#d3e3da;"></div>
<div class="a" style="left:480px;top:435px;width:100px;height:1px;background:#666;"></div>
<div class="t" style="left:452.00px;top:421.66px;font-size:10.07px;line-height:12.08px;color:#5a5a5a;letter-spacing:-0.285px;">14:30</div>
<div class="a" style="left:480px;top:436px;width:100px;height:17px;background:#fff;"></div>
<div class="a" style="left:449px;top:453px;width:30px;height:1px;background:#d3e3da;"></div>
<div class="a" style="left:480px;top:453px;width:100px;height:1px;background:#d3e3da;"></div>
<div class="t" style="left:452.00px;top:438.95px;font-size:10.07px;line-height:12.08px;color:#5a5a5a;letter-spacing:-0.285px;">15:00</div>
<div class="a" style="left:480px;top:454px;width:100px;height:16px;background:#fff;"></div>
<div class="a" style="left:449px;top:470px;width:30px;height:1px;background:#d3e3da;"></div>
<div class="a" style="left:480px;top:470px;width:100px;height:1px;background:#666;"></div>
<div class="t" style="left:452.00px;top:456.24px;font-size:10.07px;line-height:12.08px;color:#5a5a5a;letter-spacing:-0.285px;">15:30</div>
<div class="a" style="left:479px;top:471px;width:101px;height:17px;background:#fff;"></div>
<div class="a" style="left:449px;top:488px;width:132px;height:1px;background:#d3e3da;"></div>
<div class="t" style="left:452.60px;top:474.74px;font-size:10.2px;line-height:12.24px;color:#1a1a1a;font-weight:bold;">Cito!</div>
<div class="a" style="left:584px;top:101px;width:131px;height:79px;background:#e6dcc4;border-radius:8px 8px 0 0;"></div>
<div class="t" style="left:584.15px;top:115.37px;font-size:10.49px;line-height:12.59px;color:#000;text-align:center;width:131px;letter-spacing:-0.296px;">Четверг 13-04-2023</div>
<div class="t" style="left:584.15px;top:127.72px;font-size:10.44px;line-height:12.53px;color:#111;text-align:center;width:131px;letter-spacing:-0.306px;">Город здоровья</div>
<div class="a" style="left:716px;top:180px;width:1px;height:32px;background:#e3efed;"></div>
<div class="a" style="left:584px;top:180px;width:130px;height:29px;background:#fff;border:1px solid #f36b6b;border-top:1px solid #fff;"></div>
<div class="t" style="left:584.00px;top:183.66px;font-size:10.6px;line-height:12.72px;color:#000;text-align:center;width:132px;">Тестовый врач! НЕ</div>
<div class="t" style="left:584.00px;top:195.76px;font-size:10.6px;line-height:12.72px;color:#000;text-align:center;width:132px;">ЗАПИСЫВАТЬ!!!!</div>
<div class="a" style="left:584px;top:211px;width:132px;height:1px;background:#e3efed;"></div>
<div class="a" style="left:715px;top:211px;width:1px;height:18px;background:#d3e3da;"></div>
<div class="t" style="left:616.90px;top:214.06px;font-size:10.18px;line-height:12.22px;color:#666;letter-spacing:-0.263px;">09:00 - 16:00</div>
<div class="a" style="left:613px;top:211px;width:1px;height:259px;background:#d3e3da;"></div>
<div class="a" style="left:584px;top:228px;width:131px;height:1px;background:#d3e3da;"></div>
<div class="a" style="left:614px;top:229px;width:101px;height:16px;background:#fff;"></div>
<div class="a" style="left:584px;top:245px;width:29px;height:1px;background:#d3e3da;"></div>
<div class="a" style="left:614px;top:245px;width:101px;height:1px;background:#d3e3da;"></div>
<div class="t" style="left:587.00px;top:231.47px;font-size:10.07px;line-height:12.08px;color:#5a5a5a;letter-spacing:-0.277px;">9:00</div>
<div class="a" style="left:614px;top:246px;width:101px;height:16px;background:#fff;"></div>
<div class="a" style="left:584px;top:262px;width:29px;height:1px;background:#d3e3da;"></div>
<div class="a" style="left:614px;top:262px;width:101px;height:1px;background:#666;"></div>
<div class="t" style="left:587.00px;top:248.76px;font-size:10.07px;line-height:12.08px;color:#5a5a5a;letter-spacing:-0.277px;">9:30</div>
<div class="a" style="left:614px;top:263px;width:101px;height:17px;background:#fff;"></div>
<div class="a" style="left:584px;top:280px;width:29px;height:1px;background:#d3e3da;"></div>
<div class="a" style="left:614px;top:280px;width:101px;height:1px;background:#d3e3da;"></div>
<div class="t" style="left:587.00px;top:266.05px;font-size:10.07px;line-height:12.08px;color:#5a5a5a;letter-spacing:-0.285px;">10:00</div>
<div class="a" style="left:614px;top:281px;width:101px;height:16px;background:#fff;"></div>
<div class="a" style="left:584px;top:297px;width:29px;height:1px;background:#d3e3da;"></div>
<div class="a" style="left:614px;top:297px;width:101px;height:1px;background:#666;"></div>
<div class="t" style="left:587.00px;top:283.34px;font-size:10.07px;line-height:12.08px;color:#5a5a5a;letter-spacing:-0.285px;">10:30</div>
<div class="a" style="left:614px;top:298px;width:101px;height:16px;background:#fff;"></div>
<div class="a" style="left:584px;top:314px;width:29px;height:1px;background:#d3e3da;"></div>
<div class="a" style="left:614px;top:314px;width:101px;height:1px;background:#d3e3da;"></div>
<div class="t" style="left:587.00px;top:300.63px;font-size:10.07px;line-height:12.08px;color:#5a5a5a;letter-spacing:-0.277px;">11:00</div>
<div class="a" style="left:614px;top:315px;width:101px;height:17px;background:#fff;"></div>
<div class="a" style="left:584px;top:332px;width:29px;height:1px;background:#d3e3da;"></div>
<div class="a" style="left:614px;top:332px;width:101px;height:1px;background:#666;"></div>
<div class="t" style="left:587.00px;top:317.92px;font-size:10.07px;line-height:12.08px;color:#5a5a5a;letter-spacing:-0.277px;">11:30</div>
<div class="a" style="left:614px;top:333px;width:101px;height:16px;background:#fff;"></div>
<div class="a" style="left:584px;top:349px;width:29px;height:1px;background:#d3e3da;"></div>
<div class="a" style="left:614px;top:349px;width:101px;height:1px;background:#d3e3da;"></div>
<div class="t" style="left:587.00px;top:335.21px;font-size:10.07px;line-height:12.08px;color:#5a5a5a;letter-spacing:-0.285px;">12:00</div>
<div class="a" style="left:614px;top:350px;width:101px;height:16px;background:#fff;"></div>
<div class="a" style="left:584px;top:366px;width:29px;height:1px;background:#d3e3da;"></div>
<div class="a" style="left:614px;top:366px;width:101px;height:1px;background:#666;"></div>
<div class="t" style="left:587.00px;top:352.50px;font-size:10.07px;line-height:12.08px;color:#5a5a5a;letter-spacing:-0.285px;">12:30</div>
<div class="a" style="left:614px;top:367px;width:101px;height:17px;background:#fff;"></div>
<div class="a" style="left:584px;top:384px;width:29px;height:1px;background:#d3e3da;"></div>
<div class="a" style="left:614px;top:384px;width:101px;height:1px;background:#d3e3da;"></div>
<div class="t" style="left:587.00px;top:369.79px;font-size:10.07px;line-height:12.08px;color:#5a5a5a;letter-spacing:-0.285px;">13:00</div>
<div class="a" style="left:614px;top:385px;width:101px;height:16px;background:#fff;"></div>
<div class="a" style="left:584px;top:401px;width:29px;height:1px;background:#d3e3da;"></div>
<div class="a" style="left:614px;top:401px;width:101px;height:1px;background:#666;"></div>
<div class="t" style="left:587.00px;top:387.08px;font-size:10.07px;line-height:12.08px;color:#5a5a5a;letter-spacing:-0.285px;">13:30</div>
<div class="a" style="left:614px;top:402px;width:101px;height:16px;background:#fff;"></div>
<div class="a" style="left:584px;top:418px;width:29px;height:1px;background:#d3e3da;"></div>
<div class="a" style="left:614px;top:418px;width:101px;height:1px;background:#d3e3da;"></div>
<div class="t" style="left:587.00px;top:404.37px;font-size:10.07px;line-height:12.08px;color:#5a5a5a;letter-spacing:-0.285px;">14:00</div>
<div class="a" style="left:614px;top:419px;width:101px;height:16px;background:#fff;"></div>
<div class="a" style="left:584px;top:435px;width:29px;height:1px;background:#d3e3da;"></div>
<div class="a" style="left:614px;top:435px;width:101px;height:1px;background:#666;"></div>
<div class="t" style="left:587.00px;top:421.66px;font-size:10.07px;line-height:12.08px;color:#5a5a5a;letter-spacing:-0.285px;">14:30</div>
<div class="a" style="left:614px;top:436px;width:101px;height:17px;background:#fff;"></div>
<div class="a" style="left:584px;top:453px;width:29px;height:1px;background:#d3e3da;"></div>
<div class="a" style="left:614px;top:453px;width:101px;height:1px;background:#d3e3da;"></div>
<div class="t" style="left:587.00px;top:438.95px;font-size:10.07px;line-height:12.08px;color:#5a5a5a;letter-spacing:-0.285px;">15:00</div>
<div class="a" style="left:614px;top:454px;width:101px;height:16px;background:#fff;"></div>
<div class="a" style="left:584px;top:470px;width:29px;height:1px;background:#d3e3da;"></div>
<div class="a" style="left:614px;top:470px;width:101px;height:1px;background:#666;"></div>
<div class="t" style="left:587.00px;top:456.24px;font-size:10.07px;line-height:12.08px;color:#5a5a5a;letter-spacing:-0.285px;">15:30</div>
<div class="a" style="left:613px;top:471px;width:102px;height:17px;background:#fff;"></div>
<div class="a" style="left:584px;top:488px;width:132px;height:1px;background:#d3e3da;"></div>
<div class="t" style="left:587.60px;top:474.74px;font-size:10.2px;line-height:12.24px;color:#1a1a1a;font-weight:bold;">Cito!</div>
<div class="a" style="left:180px;top:492px;width:131px;height:79px;background:#e6dcc4;border-radius:8px 8px 0 0;"></div>
<div class="t" style="left:180.15px;top:506.37px;font-size:10.49px;line-height:12.59px;color:#000;text-align:center;width:131px;letter-spacing:-0.307px;">Пятница 14-04-2023</div>
<div class="t" style="left:180.15px;top:518.72px;font-size:10.44px;line-height:12.53px;color:#111;text-align:center;width:131px;letter-spacing:-0.306px;">Город здоровья</div>
<div class="a" style="left:312px;top:571px;width:2px;height:33px;background:#e3efed;"></div>
<div class="a" style="left:180px;top:571px;width:130px;height:30px;background:#fff;border:1px solid #f36b6b;border-top:1px solid #fff;"></div>
<div class="t" style="left:180.00px;top:574.66px;font-size:10.6px;line-height:12.72px;color:#000;text-align:center;width:132px;">Тестовый врач! НЕ</div>
<div class="t" style="left:180.00px;top:586.76px;font-size:10.6px;line-height:12.72px;color:#000;text-align:center;width:132px;">ЗАПИСЫВАТЬ!!!!</div>
<div class="a" style="left:315px;top:492px;width:131px;height:79px;background:#e6dcc4;border-radius:8px 8px 0 0;"></div>
<div class="t" style="left:315.15px;top:506.37px;font-size:10.49px;line-height:12.59px;color:#000;text-align:center;width:131px;letter-spacing:-0.305px;">Суббота 15-04-2023</div>
<div class="t" style="left:315.15px;top:518.72px;font-size:10.44px;line-height:12.53px;color:#111;text-align:center;width:131px;letter-spacing:-0.306px;">Город здоровья</div>
<div class="a" style="left:446px;top:571px;width:2px;height:33px;background:#e3efed;"></div>
<div class="a" style="left:314px;top:571px;width:130px;height:30px;background:#fff;border:1px solid #f36b6b;border-top:1px solid #fff;"></div>
<div class="t" style="left:314.00px;top:574.66px;font-size:10.6px;line-height:12.72px;color:#000;text-align:center;width:132px;">Тестовый врач! НЕ</div>
<div class="t" style="left:314.00px;top:586.76px;font-size:10.6px;line-height:12.72px;color:#000;text-align:center;width:132px;">ЗАПИСЫВАТЬ!!!!</div>
<div class="a" style="left:449px;top:492px;width:132px;height:79px;background:#e6dcc4;border-radius:8px 8px 0 0;"></div>
<div class="t" style="left:449.15px;top:506.37px;font-size:10.49px;line-height:12.59px;color:#000;text-align:center;width:132px;letter-spacing:-0.304px;">Воскресенье 16-04-2023</div>
<div class="t" style="left:449.15px;top:518.72px;font-size:10.44px;line-height:12.53px;color:#111;text-align:center;width:132px;letter-spacing:-0.306px;">Город здоровья</div>
<div class="a" style="left:581px;top:571px;width:2px;height:33px;background:#e3efed;"></div>
<div class="a" style="left:449px;top:571px;width:130px;height:30px;background:#fff;border:1px solid #f36b6b;border-top:1px solid #fff;"></div>
<div class="t" style="left:449.00px;top:574.66px;font-size:10.6px;line-height:12.72px;color:#000;text-align:center;width:132px;">Тестовый врач! НЕ</div>
<div class="t" style="left:449.00px;top:586.76px;font-size:10.6px;line-height:12.72px;color:#000;text-align:center;width:132px;">ЗАПИСЫВАТЬ!!!!</div>
<div class="a" style="left:584px;top:492px;width:131px;height:79px;background:#e6dcc4;border-radius:8px 8px 0 0;"></div>
<div class="t" style="left:584.15px;top:506.37px;font-size:10.49px;line-height:12.59px;color:#000;text-align:center;width:131px;letter-spacing:-0.309px;">Понедельник 17-04-2023</div>
<div class="t" style="left:584.15px;top:518.72px;font-size:10.44px;line-height:12.53px;color:#111;text-align:center;width:131px;letter-spacing:-0.306px;">Город здоровья</div>
<div class="a" style="left:716px;top:571px;width:1px;height:33px;background:#e3efed;"></div>
<div class="a" style="left:584px;top:571px;width:130px;height:30px;background:#fff;border:1px solid #f36b6b;border-top:1px solid #fff;"></div>
<div class="t" style="left:584.00px;top:574.66px;font-size:10.6px;line-height:12.72px;color:#000;text-align:center;width:132px;">Тестовый врач! НЕ</div>
<div class="t" style="left:584.00px;top:586.76px;font-size:10.6px;line-height:12.72px;color:#000;text-align:center;width:132px;">ЗАПИСЫВАТЬ!!!!</div>
</body></html>
